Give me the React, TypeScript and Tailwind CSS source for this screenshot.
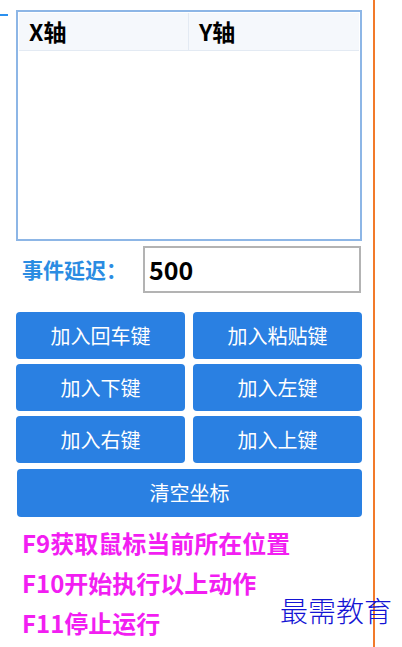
const font = { fontFamily: '"Noto Sans CJK SC", "Noto Sans", sans-serif' }

const keys = ["加入回车键", "加入粘贴键", "加入下键", "加入左键", "加入右键", "加入上键"]

const hints = ["F9获取鼠标当前所在位置", "F10开始执行以上动作", "F11停止运行"]

export default function App() {
  return (
    <div className="relative w-[402px] h-[647px] bg-white overflow-hidden" style={font}>
      {/* 左侧蓝色短线 */}
      <div className="absolute left-0 top-[14px] w-[8px] h-[2px] bg-[#2b90ef]" />

      <div className="w-[375px] h-full border-r-2 border-[#f27a2a] pt-[10px] pl-[16px] pr-[11px]">
        {/* 坐标表格 */}
        <div className="h-[231px] border-2 border-[#8db6e6] bg-white p-[1px]">
          <div className="flex h-[38px] bg-[#f5f8fc] border-b border-[#e3eaf3]">
            <div className="w-[170px] border-r border-[#e3eaf3] flex items-center pl-[10px] text-[23px] font-bold text-black">
              X轴
            </div>
            <div className="flex-1 flex items-center pl-[10px] text-[23px] font-bold text-black">Y轴</div>
          </div>
        </div>

        {/* 事件延迟 */}
        <div className="mt-[5px] flex items-center h-[47px]">
          <div className="pl-[6px] w-[127px] text-[21px] font-bold text-[#2b8ce2]">事件延迟：</div>
          <div className="w-[218px] h-[47px] border-2 border-[#b3b3b3] flex items-center pl-[4px] text-[25px] font-bold text-black">
            500
          </div>
        </div>

        {/* 按键 */}
        <div className="mt-[19px] grid grid-cols-2 gap-x-[8px] gap-y-[5px]">
          {keys.map((k) => (
            <button
              key={k}
              className="h-[47px] rounded-[4px] bg-[#2a80e2] text-white text-[20px] flex items-center justify-center"
            >
              {k}
            </button>
          ))}
        </div>
        <button className="mt-[6px] ml-[1px] w-[345px] h-[48px] rounded-[4px] bg-[#2a80e2] text-white text-[20px] flex items-center justify-center">
          清空坐标
        </button>

        {/* 快捷键说明 */}
        <div className="mt-[6px] pl-[6px] flex flex-col">
          {hints.map((h) => (
            <div key={h} className="h-[40px] flex items-center text-[24px] font-bold text-[#f21ef2] whitespace-nowrap">
              {h}
            </div>
          ))}
        </div>
      </div>

      {/* 水印 */}
      <div className="absolute left-[280px] top-[596px] text-[28px] leading-none text-[#1414d4] font-light">
        最需教育
      </div>
    </div>
  )
}
